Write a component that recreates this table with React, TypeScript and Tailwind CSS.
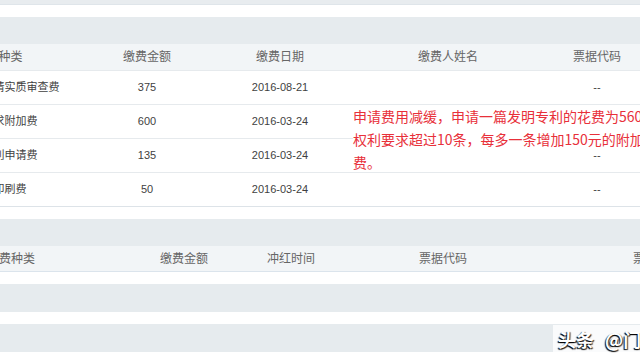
import React from "react";

const FONT = { fontFamily: '"Liberation Sans", "Noto Sans CJK SC", sans-serif' };

const rows1 = [
  { kind: "发明专利申请实质审查费", amt: "375", date: "2016-08-21" },
  { kind: "权利要求附加费", amt: "600", date: "2016-03-24" },
  { kind: "发明专利申请费", amt: "135", date: "2016-03-24" },
  { kind: "公布印刷费", amt: "50", date: "2016-03-24" },
];

function Table1() {
  const cols = "grid grid-cols-[204px_100px_166px_170px_128px]";
  return (
    <div className="flex flex-col">
      <div className="h-[27px] bg-[#e6ebee]" />
      <div className="overflow-hidden">
        <div className="ml-[-107px] w-[900px]">
          <div className={`${cols} h-[26px] items-center bg-[#f2f5f7] text-[12px] text-[#666]`}>
            <div className="text-center pl-[7px]">费用种类</div>
            <div className="text-center">缴费金额</div>
            <div className="text-center">缴费日期</div>
            <div className="text-center">缴费人姓名</div>
            <div className="text-center">票据代码</div>
          </div>
          {rows1.map((r, i) => (
            <div
              key={i}
              className={`${cols} h-[34px] items-center bg-white text-[11px] text-[#3f3f3f] border-t border-[#e6eaed]`}
            >
              <div className="text-center whitespace-nowrap pl-[8px]">{r.kind}</div>
              <div className="text-center">{r.amt}</div>
              <div className="text-center">{r.date}</div>
              <div className="text-center" />
              <div className="text-center">--</div>
            </div>
          ))}
        </div>
      </div>
      <div className="h-px bg-[#dde3e8]" />
    </div>
  );
}

function Table2() {
  const cols = "grid grid-cols-[222px_124px_90px_214px_214px]";
  return (
    <div className="flex flex-col">
      <div className="h-[27px] bg-[#e6ebee]" />
      <div className="overflow-hidden">
        <div className="ml-[-100px] w-[900px]">
          <div className={`${cols} h-[26px] items-center bg-[#f2f5f7] text-[12px] text-[#666] border-b border-[#dbe4ec]`}>
            <div className="text-center">缴费种类</div>
            <div className="text-center">缴费金额</div>
            <div className="text-center">冲红时间</div>
            <div className="text-center">票据代码</div>
            <div className="text-center">票据号码</div>
          </div>
        </div>
      </div>
    </div>
  );
}

export default function App() {
  return (
    <div className="relative w-[640px] h-[360px] overflow-hidden bg-white" style={FONT}>
      <div className="flex flex-col">
        <div className="h-[5px] bg-[#e8ecef] border-b border-[#dfe5ea]" />
        <div className="h-[12px]" />
        <Table1 />
        <div className="h-[12px]" />
        <Table2 />
        <div className="h-[12px]" />
        <div className="h-[28px] bg-[#e6ebee]" />
        <div className="h-[12px]" />
        <div className="h-[28px] bg-[#e6ebee]" />
      </div>

      <div
        className="absolute left-[353px] top-[105px] text-[14px] leading-[23px] text-[#e8303a]"
        style={{ fontFamily: '"Noto Sans CJK SC", "Liberation Sans", sans-serif' }}
      >
        <div className="whitespace-nowrap"><span className="bg-white">申请费用减缓，申请一篇发明专利的花费为560元，</span></div>
        <div className="whitespace-nowrap"><span className="bg-white">权利要求超过10条，每多一条增加150元的附加费用</span></div>
        <div className="whitespace-nowrap"><span className="bg-white">费。</span></div>
      </div>

      <div
        className="absolute left-[553px] top-[325px] w-[100px] h-[28px] bg-white/80 flex items-center gap-[11px] text-[18px] font-bold text-white [text-shadow:-1px_1px_1px_#000,1px_1px_1px_#333] whitespace-nowrap"
        style={{ fontFamily: '"Noto Sans CJK SC", sans-serif' }}
      >
        <span className="ml-[5px]">头条</span>
        <span>@门</span>
      </div>
    </div>
  );
}
